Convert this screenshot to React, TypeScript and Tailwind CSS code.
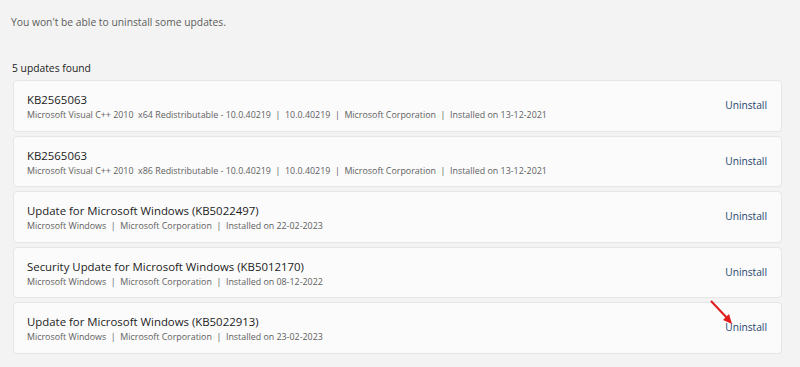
const updates = [
  {
    name: 'KB2565063',
    details: ['Microsoft Visual C++ 2010  x64 Redistributable - 10.0.40219', '10.0.40219', 'Microsoft Corporation', 'Installed on 13-12-2021'],
  },
  {
    name: 'KB2565063',
    details: ['Microsoft Visual C++ 2010  x86 Redistributable - 10.0.40219', '10.0.40219', 'Microsoft Corporation', 'Installed on 13-12-2021'],
  },
  {
    name: 'Update for Microsoft Windows (KB5022497)',
    details: ['Microsoft Windows', 'Microsoft Corporation', 'Installed on 22-02-2023'],
  },
  {
    name: 'Security Update for Microsoft Windows (KB5012170)',
    details: ['Microsoft Windows', 'Microsoft Corporation', 'Installed on 08-12-2022'],
  },
  {
    name: 'Update for Microsoft Windows (KB5022913)',
    details: ['Microsoft Windows', 'Microsoft Corporation', 'Installed on 23-02-2023'],
  },
];

const App = (): JSX.Element => {
  return (
    <div className="w-[800px] h-[367px] bg-[#f3f3f3] overflow-hidden font-['Open_Sans',sans-serif] text-[#1b1b1b]">
      <p className="pt-[14px] pl-[11px] text-[10.3px] text-[#5d5d5d] leading-[16px]">
        You won't be able to uninstall some updates.
      </p>

      <h3 className="mt-[30px] pl-[12px] text-[10.3px] font-medium leading-[16px]">5 updates found</h3>

      <div className="flex flex-col gap-[4px] mt-[4px] ml-[13px] w-[769px]">
        {updates.map((u, i) => (
          <div
            key={i}
            className="relative flex items-center justify-between h-[51.5px] pl-[13px] pr-[14px] bg-[#fbfbfb] border border-[#e6e6e6] rounded-[4px]"
          >
            <div className="flex flex-col pt-[2px]">
              <span className="text-[11.4px] leading-[16px] text-[#1b1b1b]">{u.name}</span>
              <span className="text-[8.9px] leading-[13px] text-[#606060] whitespace-pre">
                {u.details.join('  |  ')}
              </span>
            </div>
            <a className="text-[10.2px] text-[#27466f] cursor-pointer">Uninstall</a>

            {i === updates.length - 1 && (
              <svg className="absolute right-[45px] -top-[3px]" width="28" height="28" viewBox="0 0 28 28">
                <line x1="3" y1="1" x2="20" y2="19" stroke="#e01b1b" strokeWidth="2" />
                <polygon points="24,24 15,20 21,14" fill="#e01b1b" />
              </svg>
            )}
          </div>
        ))}
      </div>
    </div>
  );
};

export default App;
